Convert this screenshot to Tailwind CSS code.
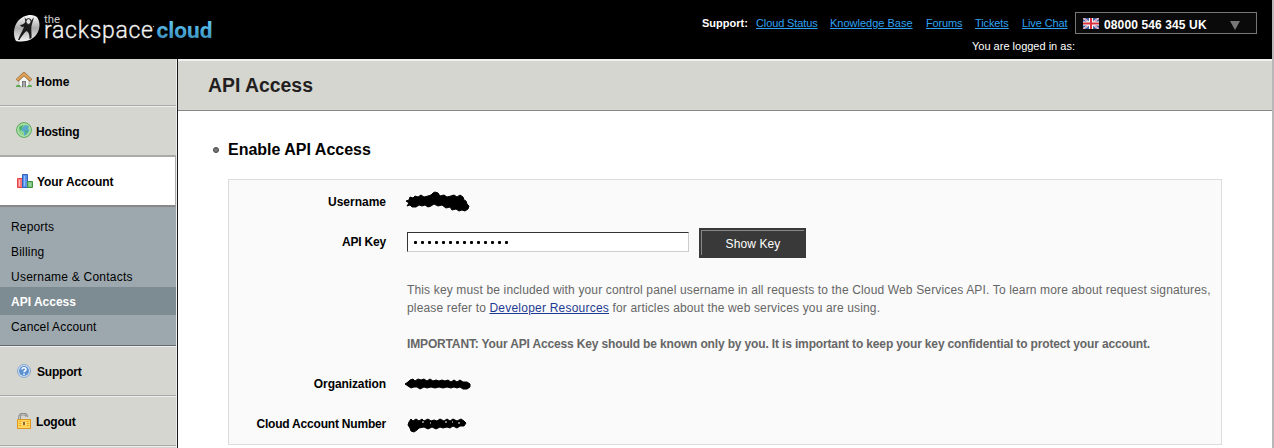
<!DOCTYPE html>
<html lang="en">
<head>
<meta charset="utf-8">
<title>API Access</title>
<script src="https://cdn.jsdelivr.net/npm/@tailwindcss/browser@4"></script>
</head>
<body class="bg-white font-['Liberation_Sans',Arial,sans-serif] text-[12px] text-black">
<div class="flex h-[448px] w-[1274px] flex-col overflow-hidden border-r-2 border-[#b8b8b8]">
  <header class="flex h-[59px] shrink-0 justify-between bg-black pl-[13px] text-[11px] text-white">
    <svg width="204" height="59" viewBox="0 0 204 59">
      <defs>
        <linearGradient id="silver" x1="0" y1="0" x2="0" y2="1"><stop offset="0" stop-color="#fff"/><stop offset=".5" stop-color="#aaa"/><stop offset="1" stop-color="#f4f4f4"/></linearGradient>
        <linearGradient id="sky" x1="0" y1="0" x2="0" y2="1"><stop offset=".2" stop-color="#5cc4f2"/><stop offset="1" stop-color="#3484b0"/></linearGradient>
      </defs>
      <path d="M3 41C0 36 0 27 5 21C10 15 19 13 24 17C29 24 26 34 20 38C15 42 7 42 3 41Z" fill="url(#silver)"/>
      <path d="M7 25C9 25 11 24 12.500 22L11.500 17L14 21L18 21L21 17L19 24C17.500 29 19 34 18.500 38L16.500 39C16.500 34 15.500 32 13.500 31C11 33 8 37 6.500 40L5 40C6.500 35 10 31 11 26.500C9.500 27.500 8 27 7 25Z" fill="#1a1a1a"/>
      <ellipse cx="15.500" cy="21.500" rx="2.600" ry="2.900" fill="#ddd" stroke="#111" stroke-width="1"/>
      <text x="31" y="22.500" font-family="Roboto,sans-serif" font-size="10" fill="#ccc" textLength="16" lengthAdjust="spacingAndGlyphs">the</text>
      <text x="31" y="38" font-family="Roboto,sans-serif" font-size="23" font-weight="300" fill="#f2f2f2" stroke="#f2f2f2" stroke-width=".3" textLength="109" lengthAdjust="spacing">rackspace</text>
      <circle cx="140.500" cy="26.500" r=".7" fill="#aaa"/>
      <text x="143.500" y="38" font-family="Roboto,sans-serif" font-weight="700" font-size="22.500" fill="url(#sky)" textLength="56" lengthAdjust="spacingAndGlyphs">cloud</text>
    </svg>
    <div class="flex w-[571px] flex-col">
      <div class="flex h-[34px] pt-3">
        <div class="flex h-[22px] w-[374px] items-center whitespace-nowrap text-[#2ea3f2]">
          <b class="w-[55px] pl-px text-white">Support:</b>
          <a class="w-[74px] tracking-[-0.12px] underline">Cloud Status</a>
          <a class="w-[96px] underline">Knowledge Base</a>
          <a class="w-[49px] tracking-[-0.15px] underline">Forums</a>
          <a class="w-[47px] tracking-[-0.1px] underline">Tickets</a>
          <a class="tracking-[-0.12px] underline">Live Chat</a>
        </div>
        <div class="flex h-[22px] w-[182px] items-center border border-[#777] bg-[#0a0a0a] pl-[7px]">
          <svg width="16" height="11" viewBox="0 0 16 11"><path fill="#3f5fa8" d="M0 0h16v11H0z"/><path d="M0 0L16 11M16 0L0 11" stroke="#e8e8f4" stroke-width="1.800"/><path d="M0 0L16 11M16 0L0 11" stroke="#e06a70" stroke-width=".7"/><path d="M8 0V11M0 5.500H16" stroke="#fff" stroke-width="4"/><path d="M8 0V11M0 5.500H16" stroke="#d8303c" stroke-width="2"/></svg>
          <b class="ml-[5px] w-[125px] pt-[4px] text-[12px] tracking-[0.12px]">08000 546 345 UK</b>
          <svg class="mt-[2px]" width="12" height="11" viewBox="0 0 12 11"><path d="M1 2H11L6 11Z" fill="#777"/></svg>
        </div>
      </div>
      <div class="pl-[271px] pt-[4px] text-[11px] leading-[16px]">You are logged in as:</div>
    </div>
  </header>
  <div class="flex min-h-0 flex-1">
    <aside class="flex w-[178px] shrink-0 flex-col border-r border-[#1a1a1a] bg-[#eee] font-bold">
      <nav class="w-[176px]">
        <a class="flex h-[47px] items-center border-b border-[#aaa] bg-[#d5d6d0] pl-4">
          <svg class="mb-1" width="16" height="16" viewBox="0 0 16 16"><path d="M3 8L8 3L13 8V15H3Z" fill="#f5f5f5" stroke="#bbb"/><path d="M6 9h4v6H6z" fill="#777"/><path d="M7 10h2v5H7z" fill="#aaa"/><path d="M1 8.500L8 2L15 8.500" fill="none" stroke="#9c6932" stroke-width="3.600"/><path d="M1.200 8L8 2L14.800 8" fill="none" stroke="#dfa45b" stroke-width="2.200"/><path d="M0 15c0-3 4-3 5 0zM11 15c1-3 5-3 5 0z" fill="#55a84c"/></svg>
          <span class="ml-1">Home</span></a>
        <a class="mt-px flex h-[49px] items-center border-b border-[#aaa] bg-[#d5d6d0] pl-4 pt-[2px]">
          <svg class="mb-1" width="16" height="16" viewBox="0 0 16 16"><circle cx="8" cy="8" r="7.400" fill="#8fd18a" stroke="#5aa65c"/><circle cx="8" cy="8" r="6.200" fill="#8fd48f" stroke="#c5ecc0" stroke-width=".8"/><path d="M9 3L13 4L12 7L13.500 8L11 12L8 14L8 10L5 8L7 5Z" fill="#5aa9cf"/><path d="M3 5L7 3L6 7L4 9ZM9 8l3 1-2 3z" fill="#4bb06a"/></svg>
          <span class="ml-1 tracking-[-0.2px]">Hosting</span></a>
        <a class="flex h-[51px] items-center border-b-2 border-t border-r border-[#aaa] border-b-[#888] bg-white pl-[17px] pt-[2px]">
          <svg class="mb-[3px]" width="16" height="14" viewBox="0 0 16 14"><path d="M.5 4.500h5v9h-5z" fill="#f77" stroke="#e04545"/><path d="M2.500 6v6" stroke="#fbb"/><path d="M5.500.5h5v13h-5z" fill="#5d94ea" stroke="#2e62bd"/><path d="M7.500 2v10" stroke="#93bcfa"/><path d="M10.500 7.500h5v6h-5z" fill="#7fc47b" stroke="#3e9145"/><path d="M13 9v3" stroke="#bbe5b5"/></svg>
          <span class="ml-1 tracking-[-0.08px]">Your Account</span></a>
        <div class="h-[139px] border-b border-[#666a70] bg-[#9da8ae] pt-[8px] font-normal leading-[25px] *:block *:h-[25px] *:pl-[11px]">
          <a class="tracking-[0.15px]">Reports</a><a class="tracking-[0.2px]">Billing</a><a class="tracking-[0.23px]">Username &amp; Contacts</a>
          <div class="-mt-[3px] bg-[#7d8b92]"><b class="-ml-[11px] block h-[28px] bg-[#7d8b92] pl-[11px] pt-[3px] text-white">API Access</b></div>
          <a class="mt-[3px] tracking-[0.15px]">Cancel Account</a>
        </div>
        <a class="mt-px flex h-[49px] items-center border-b border-[#aaa] bg-[#d5d6d0] pl-[17px] pt-[2px]">
          <svg class="mb-[3px]" width="14" height="14" viewBox="0 0 14 14"><circle cx="7" cy="7" r="6.400" fill="#dbe8f7" stroke="#7d9fc8"/><circle cx="7" cy="7" r="5" fill="#5b91cf"/><path d="M5 5.500C5 3 9 3 9 5.500C9 7 7 6.500 7 8.300M7 9.500V11" fill="none" stroke="#fff" stroke-width="1.500"/></svg>
          <span class="ml-[6px] tracking-[-0.2px]">Support</span></a>
        <a class="mt-px flex h-[49px] items-center border-b border-[#aaa] bg-[#d5d6d0] pl-[17px] pt-[2px]">
          <svg class="mb-[3px]" width="14" height="16" viewBox="0 0 14 16"><path d="M2.500 7V4C2.500 0 10 0 10 4" fill="none" stroke="#888" stroke-width="2.600"/><path d="M2.500 7V4C2.500 .5 10 .5 10 4" fill="none" stroke="#c5c5c5"/><path d="M.5 6.500h13v9H.5z" fill="#ffd65c" stroke="#dc951f"/><path d="M2 8.500h10M2 10.500h10M2 12.500h10" stroke="#f0ad2a"/><path d="M4.500 8.500h5v4h-5z" fill="#ffe590"/><path d="M6 9h2v3H6z" fill="#8b6420"/></svg>
          <span class="ml-[5px] tracking-[-0.2px]">Logout</span></a>
        <div class="mt-px h-4 bg-[#d5d6d0]"></div>
      </nav>
    </aside>
    <main class="flex-1">
      <h1 class="h-[52px] border-b border-t-2 border-[#888] border-t-[#f0f0f0] bg-[#d5d6d0] pl-[30px] text-[19.4px] font-bold leading-[48px] text-[#231f20]">API Access</h1>
      <div class="flex h-[68px] items-center pl-[35px] pt-[9px]">
        <span class="mr-[9px] size-[6px] rounded-full border border-[#444] bg-[#777]"></span>
        <h2 class="text-[16px] font-bold">Enable API Access</h2>
      </div>
      <section class="ml-[50px] flex h-[266px] w-[994px] flex-col border border-[#ddd] bg-[#fafafa]">
        <div class="flex h-[40px] items-center pt-[3px]">
          <b class="w-[157px] text-right">Username</b>
          <svg class="ml-[18px] mt-[2px]" width="68" height="24" viewBox="0 0 68 24"><path d="M2 10L5 9L6 6L9 7L11 5L14 6L17 4L20 6L24 5L27 4L29 2L31 1L34 2L36 5L40 4L43 6L47 5L50 4L53 6L56 4L59 6L60 9L62 10L63 13L65 15L64 18L61 20L58 19L55 20L52 18L48 19L46 16L42 17L38 14L34 15L30 13L27 15L24 16L21 14L18 15L15 14L12 16L8 16L6 14L3 15L5 12Z" stroke="#000" stroke-width="1"/></svg>
        </div>
        <div class="flex h-[44px] pt-[8px]">
          <b class="w-[157px] pt-[6px] text-right leading-[16px] tracking-[-0.2px]">API Key</b>
          <div class="ml-[21px] mt-[4px] flex h-[20px] w-[282px] items-center gap-[4px] border border-[#ccc] border-l-[#333] border-t-[#333] bg-white pl-[6px] pt-px">
            <i class="size-[3px] rounded-[1px] bg-black"></i><i class="size-[3px] rounded-[1px] bg-black"></i><i class="size-[3px] rounded-[1px] bg-black"></i><i class="size-[3px] rounded-[1px] bg-black"></i><i class="size-[3px] rounded-[1px] bg-black"></i><i class="size-[3px] rounded-[1px] bg-black"></i><i class="size-[3px] rounded-[1px] bg-black"></i><i class="size-[3px] rounded-[1px] bg-black"></i><i class="size-[3px] rounded-[1px] bg-black"></i><i class="size-[3px] rounded-[1px] bg-black"></i><i class="size-[3px] rounded-[1px] bg-black"></i><i class="size-[3px] rounded-[1px] bg-black"></i><i class="size-[3px] rounded-[1px] bg-black"></i><i class="size-[3px] rounded-[1px] bg-black"></i>
          </div>
          <button class="ml-[10px] flex h-[30px] w-[107px] bg-[#393939] p-[2px]"><span class="block h-[25px] w-[103px] border-l border-t border-[#888] text-[12px] leading-[27px] tracking-[0.1px] text-white">Show Key</span></button>
        </div>
        <div class="ml-[178px] whitespace-nowrap pt-[17px] leading-[18px] tracking-[0.15px] text-[#666]">
          <p>This key must be included with your control panel username in all requests to the Cloud Web Services API. To learn more about request signatures,</p>
          <p>please refer to <a class="tracking-[0.22px] text-[#1f3a93] underline">Developer Resources</a> for articles about the web services you are using.</p>
          <p class="mt-[18px] font-bold tracking-[-0.15px]">IMPORTANT: Your API Access Key should be known only by you. It is important to keep your key confidential to protect your account.</p>
        </div>
        <div class="mt-[11px] flex h-[40px] items-center">
          <b class="w-[157px] text-right tracking-[-0.1px]">Organization</b>
          <svg class="ml-[18px]" width="70" height="20" viewBox="0 0 70 20"><path d="M1 10L4 8L6 6L9 5L11 7L14 5L17 6L20 5L23 7L26 5L29 7L32 6L35 7L38 6L41 7L44 6L47 8L50 6L53 8L56 6L59 8L63 8L66 10L66 13L63 15L59 15L56 13L53 14L50 13L47 14L43 13L39 14L35 13L31 14L27 13L23 14L20 13L16 15L13 13L10 13L7 14L4 12Z" stroke="#000"/></svg>
        </div>
        <div class="flex h-[40px] items-center">
          <b class="w-[157px] whitespace-nowrap text-right tracking-[-0.2px]">Cloud Account Number</b>
          <svg class="ml-[18px]" width="70" height="20" viewBox="0 0 70 20"><path d="M5 8L7 5L9 7L12 5L15 7L18 5L20 7L24 5L27 7L30 6L33 7L36 5L40 7L43 5L46 7L49 5L53 7L57 5L60 7L62 9L60 12L56 12L53 14L49 12L46 14L43 13L39 14L36 13L32 15L28 13L24 15L20 13L15 14L13 16L10 18L7 17L6 14L4 11Z" stroke="#000"/><path d="M18 8h2M26 9h1M41 8h2M48 8h1M54 9h2" stroke="#fafafa"/></svg>
        </div>
      </section>
    </main>
  </div>
</div>
</body>
</html>
